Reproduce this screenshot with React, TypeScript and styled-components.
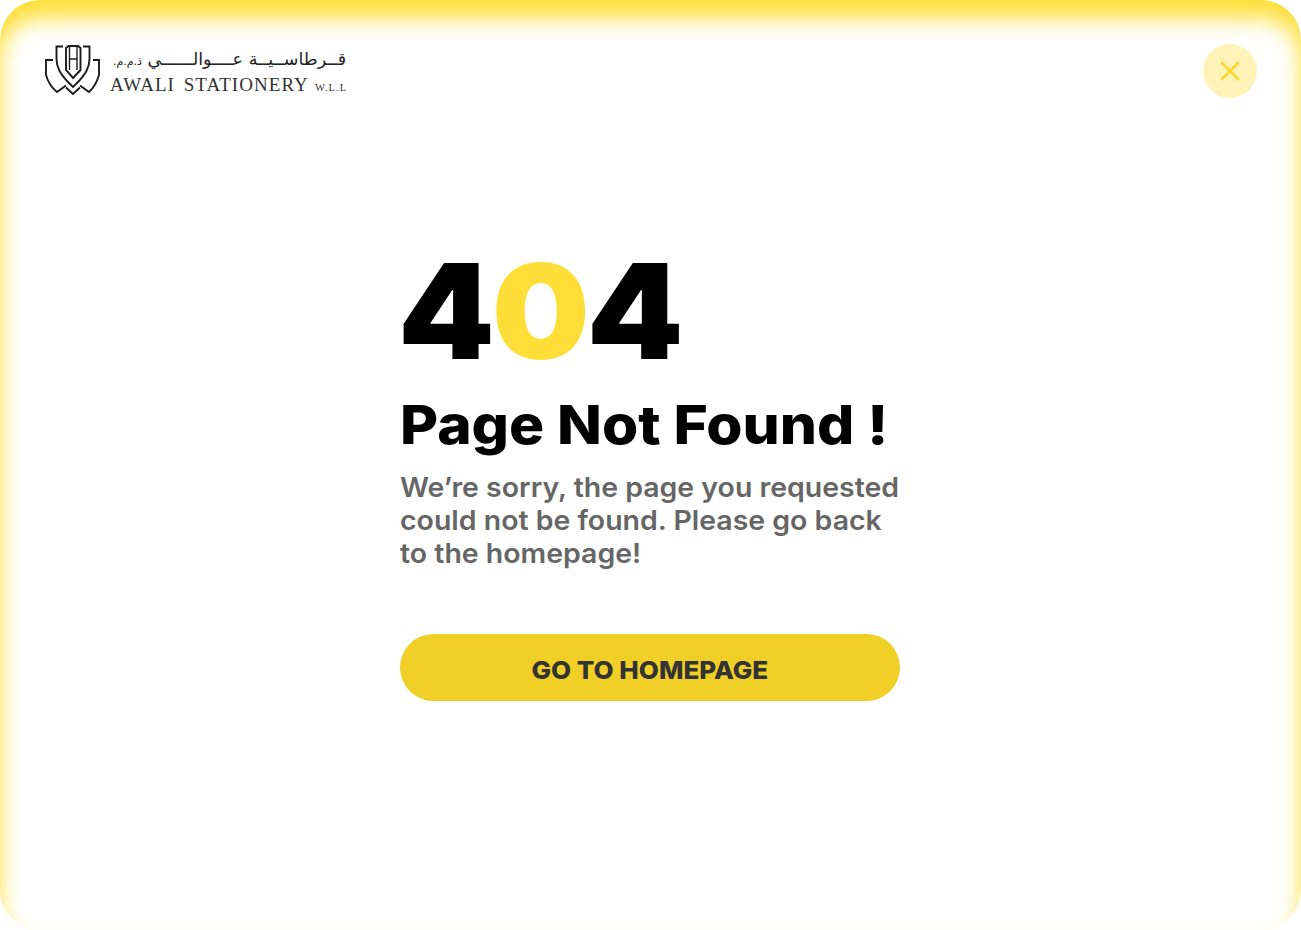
import React from "react";
import styled, { createGlobalStyle } from "styled-components";

const Global = createGlobalStyle`
  html, body { margin: 0; padding: 0; background: #fff; }
  body { font-family: "Inter", "Noto Sans", sans-serif; }
`;

const Page = styled.div`
  box-sizing: border-box;
  width: 1301px;
  height: 930px;
  overflow: hidden;
  background: #fff;
  border-radius: 40px;
  box-shadow: inset 0 18px 22px #ffdf37;
  padding: 44px 44px 0 45px;
`;

const Header = styled.header`
  display: flex;
  align-items: flex-start;
  justify-content: space-between;
`;

const Logo = styled.div`
  display: flex;
  align-items: flex-start;
  gap: 9px;
  height: 54px;
`;

const LogoText = styled.div`
  display: flex;
  flex-direction: column;
  width: 236px;
  padding-top: 3px;
`;

const LogoArabic = styled.div`
  font-family: "DejaVu Sans", sans-serif;
  font-size: 17.5px;
  line-height: 24px;
  white-space: nowrap;
  direction: rtl;
  text-align: right;
  color: #222;
`;

const LogoSmall = styled.span`
  font-size: 11px;
`;

const LogoLatin = styled.div`
  font-family: "Liberation Serif", serif;
  font-size: 19px;
  line-height: 22px;
  letter-spacing: 1.05px;
  word-spacing: 3px;
  white-space: nowrap;
  color: #333;
  span { font-size: 10.5px; margin-left: -2px; word-spacing: 0; }
`;

const Close = styled.button`
  width: 54px;
  height: 54px;
  border: 0;
  padding: 0;
  border-radius: 50%;
  background: #fff3b8;
  display: flex;
  align-items: center;
  justify-content: center;
`;

const Main = styled.main`
  width: 500px;
  margin: 145px 0 0 355px;
`;

const Code = styled.h1`
  margin: 0;
  font-size: 132px;
  font-weight: 900;
  line-height: 136px;
  letter-spacing: -3px;
  color: #000;
  transform: translateX(-2px) scaleX(1.045);
  transform-origin: left center;
`;

const Zero = styled.span`
  color: #ffdf37;
`;

const Title = styled.h2`
  margin: 13px 0 0;
  font-size: 54px;
  line-height: 66px;
  font-weight: 800;
  color: #000;
  white-space: nowrap;
  transform: scaleX(1.085);
  transform-origin: left center;
`;

const Message = styled.p`
  margin: 13px 0 0;
  font-size: 27.5px;
  line-height: 33px;
  font-weight: 600;
  color: #666;
  white-space: nowrap;
  transform: scaleX(1.035);
  transform-origin: left center;
`;

const HomeButton = styled.button`
  display: block;
  width: 500px;
  height: 67px;
  margin-top: 64px;
  border: 0;
  border-radius: 34px;
  background: #f0cf27;
  color: #333;
  font-family: inherit;
  font-size: 25px;
  font-weight: 800;
  padding-top: 5px;
`;

const ButtonLabel = styled.span`
  display: inline-block;
  transform: scaleX(1.04);
`;

const LogoMark = () => (
  <svg width="56" height="52" viewBox="45 45 56 52" fill="none" stroke="#1c1c1c" strokeWidth="1.9">
    <path d="M66 49V71L73 79L80.5 71V49L78 47H68.5Z" />
    <path d="M69.5 47V60H77V47M69.5 60V71M77 60V71" strokeWidth="1.4" />
    <path d="M63 47.5H56.5V60C56.5 70 62 76 67 82L73 88L79 82C84 76 89.5 70 89.5 60V47.5H83" />
    <path d="M53 61H46V76C48 83 52 89 57 93L66 86.5" />
    <path d="M93 61H99V76C97 83 93.5 89 89 93L80 86.5" />
    <path d="M66 88.5L73 95L80 88.5" />
  </svg>
);

export default function App() {
  return (
    <>
      <Global />
      <Page>
        <Header>
          <Logo>
            <LogoMark />
            <LogoText>
              <LogoArabic>
                قــرطاســيــة عــــوالــــــي <LogoSmall>ذ.م.م.</LogoSmall>
              </LogoArabic>
              <LogoLatin>
                AWALI STATIONERY <span>W.L.L</span>
              </LogoLatin>
            </LogoText>
          </Logo>
          <Close aria-label="Close">
            <svg width="22" height="22" viewBox="0 0 22 22" fill="none" stroke="#ffd52e" strokeWidth="2.6" strokeLinecap="round">
              <path d="M3 3L19 19M19 3L3 19" />
            </svg>
          </Close>
        </Header>
        <Main>
          <Code>
            4<Zero>0</Zero>4
          </Code>
          <Title>Page Not Found !</Title>
          <Message>
            We’re sorry, the page you requested
            <br />
            could not be found. Please go back
            <br />
            to the homepage!
          </Message>
          <HomeButton>
            <ButtonLabel>GO TO HOMEPAGE</ButtonLabel>
          </HomeButton>
        </Main>
      </Page>
    </>
  );
}
